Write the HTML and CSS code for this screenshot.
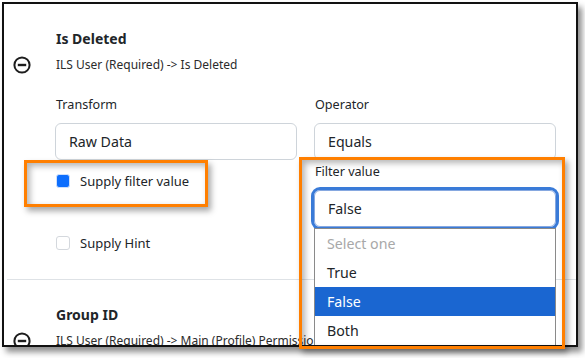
FILE: index.html
```html
<!DOCTYPE html>
<html lang="en">
<head>
    <meta charset="UTF-8">
    <meta name="viewport" content="width=device-width, initial-scale=1.0">
    <title>Is Deleted filter</title>
    <link rel="stylesheet" href="styles.css">
</head>
<body>
    <div class="page">
        <div class="shot">
            <section class="field">
                <h3 class="field-title">Is Deleted</h3>
                <div class="field-path">
                    <svg class="remove-icon" viewBox="0 0 20 20" width="20" height="20">
                        <circle cx="10" cy="10" r="7.6" fill="none" stroke="#1d1d1d" stroke-width="2"/>
                        <line x1="5.8" y1="10" x2="14.2" y2="10" stroke="#1d1d1d" stroke-width="2.4"/>
                    </svg>
                    <span>ILS User (Required) -&gt; Is Deleted</span>
                </div>

                <div class="field-grid">
                    <div class="col">
                        <div class="form-label">Transform</div>
                        <div class="form-control">Raw Data</div>
                        <div class="check"><span class="box checked"></span>Supply filter value</div>
                        <div class="check hint"><span class="box"></span>Supply Hint</div>
                    </div>
                    <div class="col">
                        <div class="form-label">Operator</div>
                        <div class="form-control">Equals</div>
                        <div class="form-label small">Filter value</div>
                        <div class="select-wrap">
                            <div class="form-control focused">False</div>
                            <ul class="options">
                                <li class="placeholder">Select one</li>
                                <li>True</li>
                                <li class="selected">False</li>
                                <li>Both</li>
                            </ul>
                        </div>
                    </div>
                </div>
            </section>

            <section class="field">
                <h3 class="field-title">Group ID</h3>
                <div class="field-path">
                    <svg class="remove-icon" viewBox="0 0 20 20" width="20" height="20">
                        <circle cx="10" cy="10" r="7.6" fill="none" stroke="#1d1d1d" stroke-width="2"/>
                        <line x1="5.8" y1="10" x2="14.2" y2="10" stroke="#1d1d1d" stroke-width="2.4"/>
                    </svg>
                    <span>ILS User (Required) -&gt; Main (Profile) Permission Group (Required) -&gt; Group ID</span>
                </div>
            </section>
        </div>

        <!-- callout boxes drawn over the screenshot -->
        <div class="mark mark-check"></div>
        <div class="mark mark-filter"></div>
    </div>
</body>
</html>
```

FILE: styles.css
```css
body {
    margin: 0;
    background: #fff;
    font-family: "Noto Sans", "Open Sans", sans-serif;
    color: #212529;
}

.page {
    position: relative;
    width: 585px;
    height: 358px;
    overflow: hidden;
}

.shot {
    position: relative;
    box-sizing: border-box;
    margin: 2px 0 0 2px;
    width: 576px;
    height: 345px;
    border: 2px solid #111;
    background: #fff;
    overflow: hidden;
    box-shadow: 4px 5px 6px rgba(0, 0, 0, 0.45);
}

.field {
    border-bottom: 1px solid #dee2e6;
    margin-left: 3px;
    padding-bottom: 27px;
}

.field-title {
    margin: 0 0 0 49px;
    padding-top: 25px;
    font-size: 14px;
    line-height: 20px;
    font-weight: 700;
}

.field-path {
    display: flex;
    align-items: center;
    margin-top: 6px;
    font-size: 12px;
    line-height: 18px;
    color: #2b2b2b;
    white-space: nowrap;
}

.remove-icon {
    margin-left: 5px;
    margin-right: 24px;
    flex: none;
}

.field-grid {
    display: grid;
    grid-template-columns: 242px 242px;
    column-gap: 17px;
    margin: 21px 0 0 48px;
}

.form-label {
    font-size: 12.6px;
    line-height: 18px;
    padding-left: 1px;
    margin-bottom: 9px;
}

.form-label.small {
    margin: 3px 0 0;
    font-size: 12.6px;
}

.form-control {
    box-sizing: border-box;
    height: 37px;
    border: 1px solid #ced4da;
    border-radius: 6px;
    padding: 0 13px;
    font-size: 14.2px;
    line-height: 35px;
}

.form-control.focused {
    border-color: #86a8e0;
    box-shadow: 0 0 0 3px #3a7bd8;
}

.select-wrap {
    position: relative;
    margin-top: 9px;
}

.options {
    position: absolute;
    top: 38px;
    left: 0;
    right: 0;
    margin: 0;
    padding: 0;
    list-style: none;
    background: #fff;
    border: 1px solid #8a8a8a;
    z-index: 2;
}

.options li {
    height: 29px;
    line-height: 29px;
    padding-left: 12px;
    font-size: 14.2px;
}

.options .placeholder {
    color: #a8a8a8;
}

.options .selected {
    background: #1a66d1;
    color: #fff;
}

.check {
    display: flex;
    align-items: center;
    font-size: 13px;
    line-height: 18px;
    margin: 12px 0 0 1px;
}

.check.hint {
    margin-top: 44px;
}

.box {
    box-sizing: border-box;
    width: 14px;
    height: 14px;
    border: 1px solid #d4d8dd;
    border-radius: 3px;
    margin-right: 10px;
    background: #fff;
}

.box.checked {
    background: #0d6efd;
    border-color: #cfe0fb;
    border-width: 1.5px;
}

.mark {
    position: absolute;
    border: 3px solid #ff7f00;
    box-shadow: inset 3px 3px 6px rgba(0, 0, 0, 0.3), 3px 4px 6px rgba(0, 0, 0, 0.35);
    z-index: 5;
}

.mark-check {
    left: 24px;
    top: 160px;
    width: 178px;
    height: 41px;
}

.mark-filter {
    left: 299px;
    top: 157px;
    width: 260px;
    height: 186px;
}
```
